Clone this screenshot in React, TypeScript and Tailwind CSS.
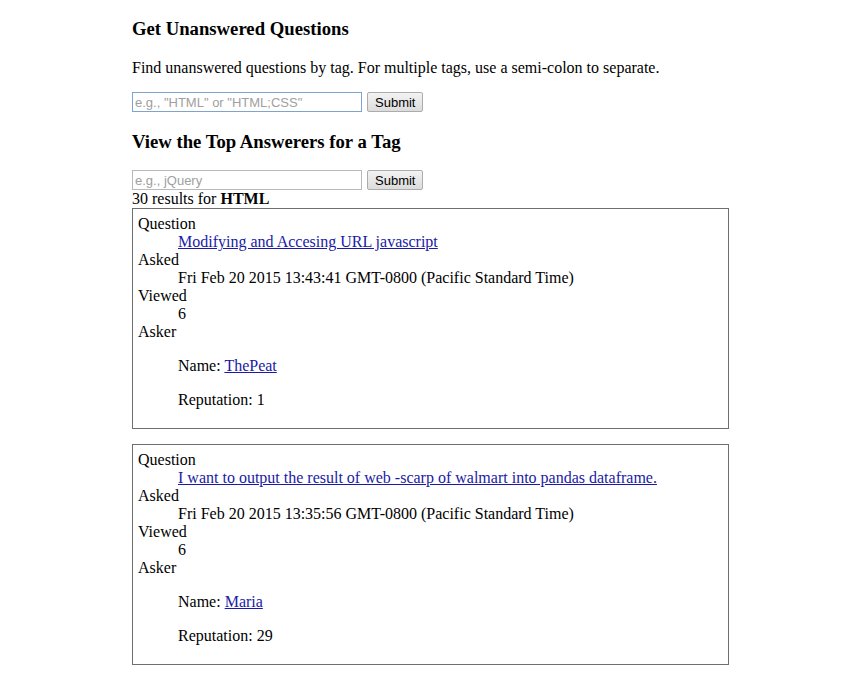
const results = [
  {
    title: "Modifying and Accesing URL javascript",
    asked: "Fri Feb 20 2015 13:43:41 GMT-0800 (Pacific Standard Time)",
    viewed: 6,
    name: "ThePeat",
    reputation: 1,
  },
  {
    title: "I want to output the result of web -scarp of walmart into pandas dataframe.",
    asked: "Fri Feb 20 2015 13:35:56 GMT-0800 (Pacific Standard Time)",
    viewed: 6,
    name: "Maria",
    reputation: 29,
  },
];

function SearchRow({ placeholder, focused }: { placeholder: string; focused?: boolean }) {
  return (
    <div className="flex items-center gap-[5px] h-[20px]">
      <input
        type="text"
        placeholder={placeholder}
        className={
          "w-[230px] h-[20px] px-[2px] bg-white text-[13px] font-['Liberation_Sans',Arial,sans-serif] placeholder:text-[#a0a0a0] outline-none border " +
          (focused ? "border-[#7fa3cf]" : "border-[#b9b9b9]")
        }
      />
      <button className="h-[20px] px-[7px] text-[13px] leading-none text-black font-['Liberation_Sans',Arial,sans-serif] border border-[#acacac] rounded-[2px] bg-gradient-to-b from-[#f3f3f3] to-[#dcdcdc]">
        Submit
      </button>
    </div>
  );
}

export default function App() {
  return (
    <div className="min-h-[680px] bg-white text-black font-['Liberation_Serif','Times_New_Roman',serif] text-[16px] leading-[18px] pl-[132px] pt-[18px]">
      <h3 className="text-[18.7px] leading-[22px] font-bold">Get Unanswered Questions</h3>
      <p className="mt-[19px]">
        Find unanswered questions by tag. For multiple tags, use a semi-colon to separate.
      </p>
      <div className="mt-[15px]">
        <SearchRow placeholder={'e.g., "HTML" or "HTML;CSS"'} focused />
      </div>

      <h3 className="mt-[19px] text-[18.7px] leading-[22px] font-bold">View the Top Answerers for a Tag</h3>
      <div className="mt-[17px]">
        <SearchRow placeholder="e.g., jQuery" />
      </div>
      <div>
        30 results for <b>HTML</b>
      </div>

      <div className="w-[597px]">
        {results.map((r, i) => (
          <div key={i} className={"border border-[#6f6f6f] px-[5px] pt-[6px] pb-[3px]" + (i > 0 ? " mt-[15px]" : "")}>
            <dl>
              <dt>Question</dt>
              <dd className="ml-[40px]">
                <a href="#" className="text-[#1a1aa6] underline">
                  {r.title}
                </a>
              </dd>
              <dt>Asked</dt>
              <dd className="ml-[40px]">{r.asked}</dd>
              <dt>Viewed</dt>
              <dd className="ml-[40px]">{r.viewed}</dd>
              <dt>Asker</dt>
              <dd className="ml-[40px]">
                <p className="my-[16px]">
                  Name:{" "}
                  <a href="#" className="text-[#1a1aa6] underline">
                    {r.name}
                  </a>
                </p>
                <p className="my-[16px]">Reputation: {r.reputation}</p>
              </dd>
            </dl>
          </div>
        ))}
      </div>
    </div>
  );
}
